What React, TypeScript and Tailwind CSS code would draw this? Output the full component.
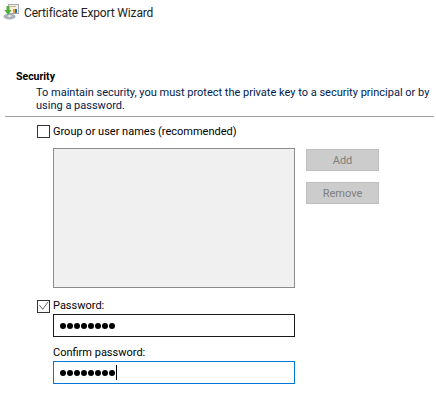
function WizardIcon() {
  return (
    <svg width="16" height="16" viewBox="0 0 16 16" className="shrink-0">
      <rect x="5.5" y="0.5" width="10" height="9" fill="#f6f0e0" stroke="#a3abb3" />
      <rect x="7" y="2" width="6" height="1" fill="#c9b28c" />
      <rect x="10" y="5" width="2" height="4" fill="#e8a020" />
      <rect x="12" y="5" width="2" height="4" fill="#2f6fc4" />
      <ellipse cx="6.5" cy="12.5" rx="6" ry="3" fill="#aab1b8" />
      <ellipse cx="6.5" cy="12" rx="2" ry="1" fill="#e6e9ec" />
      <path d="M3.5 2h3v4h2l-3.5 5L1.500 6h2z" fill="#4fae3a" />
    </svg>
  );
}

function Checkbox({ checked }: { checked?: boolean }) {
  return (
    <span className="flex h-[13px] w-[13px] shrink-0 items-center justify-center border border-[#333333] bg-white">
      {checked ? (
        <svg width="11" height="11" viewBox="0 0 11 11">
          <path d="M1.300 4 4.700 8.300 10.300 .7" fill="none" stroke="#666666" strokeWidth="1" />
        </svg>
      ) : null}
    </span>
  );
}

function SideButton({ label }: { label: string }) {
  return (
    <div className="flex h-[22px] w-[73px] items-center justify-center border border-[#bfbfbf] bg-[#cccccc] text-[#7f7f7f]">
      {label}
    </div>
  );
}

function PasswordField({ focused }: { focused?: boolean }) {
  return (
    <div
      className={`flex h-[23px] w-[242px] items-center border pl-1.5 ${
        focused ? "border-[#0078d7]" : "border-[#1a1a1a]"
      }`}
    >
      <span className="flex gap-[1px]">
        {Array.from({ length: 8 }).map((_, i) => (
          <span key={i} className="h-[6px] w-[6px] rounded-full bg-black" />
        ))}
      </span>
      {focused ? <span className="ml-[1px] h-[15px] w-px bg-black" /> : null}
    </div>
  );
}

export default function App() {
  return (
    <div className="h-[404px] w-[436px] overflow-hidden bg-white font-['Roboto','Noto_Sans',sans-serif] text-[11px] leading-[13px] text-black">
      <div className="flex h-[22px] items-start gap-[5px] pt-[4px] pl-[3px]">
        <WizardIcon />
        <span className="mt-[3px] text-[12px] tracking-[-0.15px] text-[#222222]">Certificate Export Wizard</span>
      </div>

      <div className="h-[48px]" />
      <div className="h-[14px] pl-[16px] text-[10.5px] font-bold leading-[14px]">Security</div>

      <p className="mt-[2px] whitespace-nowrap pl-[36px] text-[#001a4d]">
        To maintain security, you must protect the private key to a security principal or by
        <br />
        using a password.
      </p>

      <div className="mt-[4px] mr-[2px] ml-[5px] h-px bg-[#a0a0a0]" />

      <div className="mt-[8px] ml-[37px] flex items-center gap-[3px]">
        <Checkbox />
        <span>Group or user names (recommended)</span>
      </div>

      <div className="mt-[10px] ml-[53px] flex items-start gap-[11px]">
        <div className="h-[140px] w-[242px] border border-[#8c8c8c] bg-[#f0f0f0]" />
        <div className="flex flex-col gap-[11px] pt-[1px]">
          <SideButton label="Add" />
          <SideButton label="Remove" />
        </div>
      </div>

      <div className="mt-[12px] ml-[37px] flex items-start gap-[3px]">
        <Checkbox checked />
        <span className="-mt-px">Password:</span>
      </div>

      <div className="mt-[1px] ml-[53px]">
        <PasswordField />
        <div className="mt-[9px] mb-[2px] h-[13px] leading-[13px]">Confirm password:</div>
        <PasswordField focused />
      </div>
    </div>
  );
}
